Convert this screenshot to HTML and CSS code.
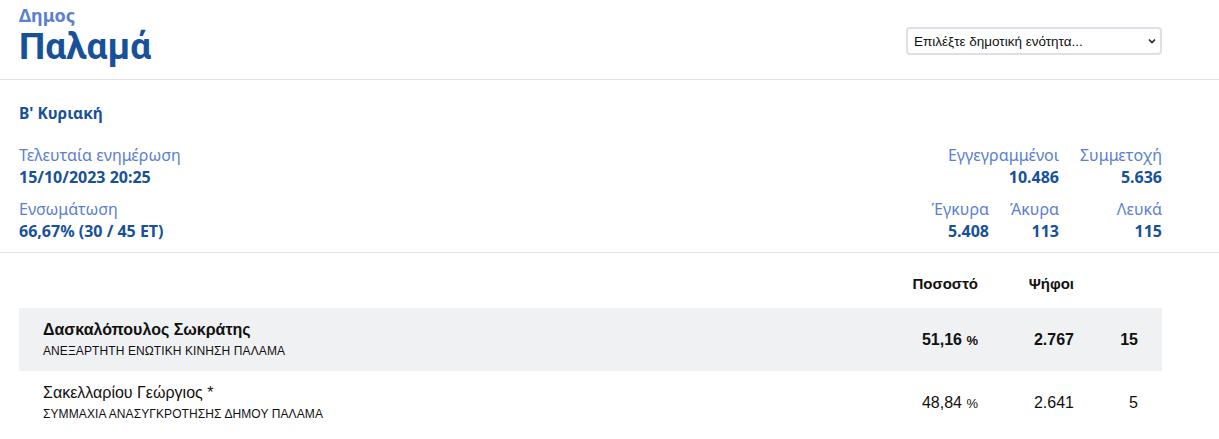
FILE: index.html
```html
<!DOCTYPE html>
<html lang="el">
<head>
    <meta charset="UTF-8">
    <meta name="viewport" content="width=device-width, initial-scale=1">
    <title>Δήμος Παλαμά</title>
    <link rel="stylesheet" href="styles.css">
</head>
<body>
    <header class="top">
        <div class="title">
            <div class="kind">Δημος</div>
            <h1 class="name">Παλαμά</h1>
        </div>
        <div class="picker">
            <select class="unit">
                <option>Επιλέξτε δημοτική ενότητα...</option>
            </select>
            <svg class="chev" width="8" height="6" viewBox="0 0 8 6">
                <path d="M1 1.5 L4 4.5 L7 1.5" fill="none" stroke="#222" stroke-width="1.6"/>
            </svg>
        </div>
    </header>

    <section class="info">
        <div class="round">Β' Κυριακή</div>
        <div class="info-row">
            <div class="meta">
                <div class="item">
                    <div class="label">Τελευταία ενημέρωση</div>
                    <div class="value">15/10/2023 20:25</div>
                </div>
                <div class="item">
                    <div class="label">Ενσωμάτωση</div>
                    <div class="value">66,67% (30 / 45 ΕΤ)</div>
                </div>
            </div>
            <div class="stats">
                <div class="item wide">
                    <div class="label">Εγγεγραμμένοι</div>
                    <div class="value">10.486</div>
                </div>
                <div class="item">
                    <div class="label">Συμμετοχή</div>
                    <div class="value">5.636</div>
                </div>
                <div class="item">
                    <div class="label">Έγκυρα</div>
                    <div class="value">5.408</div>
                </div>
                <div class="item">
                    <div class="label">Άκυρα</div>
                    <div class="value">113</div>
                </div>
                <div class="item">
                    <div class="label">Λευκά</div>
                    <div class="value">115</div>
                </div>
            </div>
        </div>
    </section>

    <section class="results">
        <div class="row head">
            <div></div>
            <div class="num">Ποσοστό</div>
            <div class="num">Ψήφοι</div>
            <div class="num"></div>
        </div>
        <div class="row cand winner">
            <div class="who">
                <div class="cname">Δασκαλόπουλος Σωκράτης</div>
                <div class="party">ΑΝΕΞΑΡΤΗΤΗ ΕΝΩΤΙΚΗ ΚΙΝΗΣΗ ΠΑΛΑΜΑ</div>
            </div>
            <div class="num">51,16 <span class="pct">%</span></div>
            <div class="num">2.767</div>
            <div class="num">15</div>
        </div>
        <div class="row cand">
            <div class="who">
                <div class="cname">Σακελλαρίου Γεώργιος *</div>
                <div class="party">ΣΥΜΜΑΧΙΑ ΑΝΑΣΥΓΚΡΟΤΗΣΗΣ ΔΗΜΟΥ ΠΑΛΑΜΑ</div>
            </div>
            <div class="num">48,84 <span class="pct">%</span></div>
            <div class="num">2.641</div>
            <div class="num">5</div>
        </div>
    </section>
</body>
</html>
```

FILE: styles.css
```css
body {
    margin: 0;
    font-family: "Noto Sans", "Liberation Sans", sans-serif;
    background-color: #fff;
    color: #111;
}

.top {
    display: flex;
    justify-content: space-between;
    padding: 4px 57px 0 19px;
    height: 75px;
    border-bottom: 1px solid #dfe2e7;
}
.kind {
    font-size: 18px;
    font-weight: 700;
    line-height: 22px;
    color: #5b7fd1;
}
.name {
    margin: 0;
    font-family: Roboto, "Noto Sans", sans-serif;
    font-size: 37px;
    font-weight: 700;
    line-height: 42px;
    color: #17519a;
}
.picker {
    position: relative;
    padding-top: 23px;
}
.unit {
    width: 256px;
    height: 28px;
    padding: 0 6px;
    font-family: "Liberation Sans", sans-serif;
    font-size: 13.5px;
    color: #111;
    background-color: #fff;
    border: 2px solid #dde1e7;
    border-radius: 4px;
    appearance: none;
    -webkit-appearance: none;
}
.chev {
    position: absolute;
    right: 6px;
    top: 34px;
}

.info {
    padding: 22px 57px 0 19px;
    height: 150px;
    border-bottom: 1px solid #dfe2e7;
}
.round {
    font-size: 15.5px;
    font-weight: 700;
    line-height: 22px;
    color: #17519a;
    margin-bottom: 20px;
}
.info-row {
    display: flex;
    justify-content: space-between;
}
.item {
    margin-bottom: 10px;
}
.label {
    font-size: 16px;
    line-height: 22px;
    color: #5b7fd1;
}
.value {
    font-size: 16px;
    font-weight: 700;
    line-height: 22px;
    color: #17519a;
}
.stats {
    display: grid;
    grid-template-columns: 70px 70px 103px;
    text-align: right;
    white-space: nowrap;
}
.stats .wide {
    grid-column: 1 / 3;
}

.results {
    padding: 21px 57px 0 19px;
    font-family: "Liberation Sans", sans-serif;
}
.row {
    display: grid;
    grid-template-columns: 1fr 120px 96px 64px;
    align-items: center;
}
.row .num {
    text-align: right;
    padding-right: 24px;
    font-size: 16px;
}
.head {
    height: 34px;
    align-items: start;
}
.head .num {
    font-weight: 700;
    font-size: 15px;
    line-height: 20px;
}
.cand {
    height: 63px;
}
.who {
    padding-left: 24px;
}
.cname {
    font-size: 16px;
    line-height: 20px;
}
.party {
    margin-top: 4px;
    font-size: 12px;
    line-height: 15px;
    letter-spacing: 0.1px;
}
.pct {
    font-size: 13px;
}
.winner {
    background-color: #f0f1f3;
}
.winner .cname,
.winner .num {
    font-weight: 700;
}
```
